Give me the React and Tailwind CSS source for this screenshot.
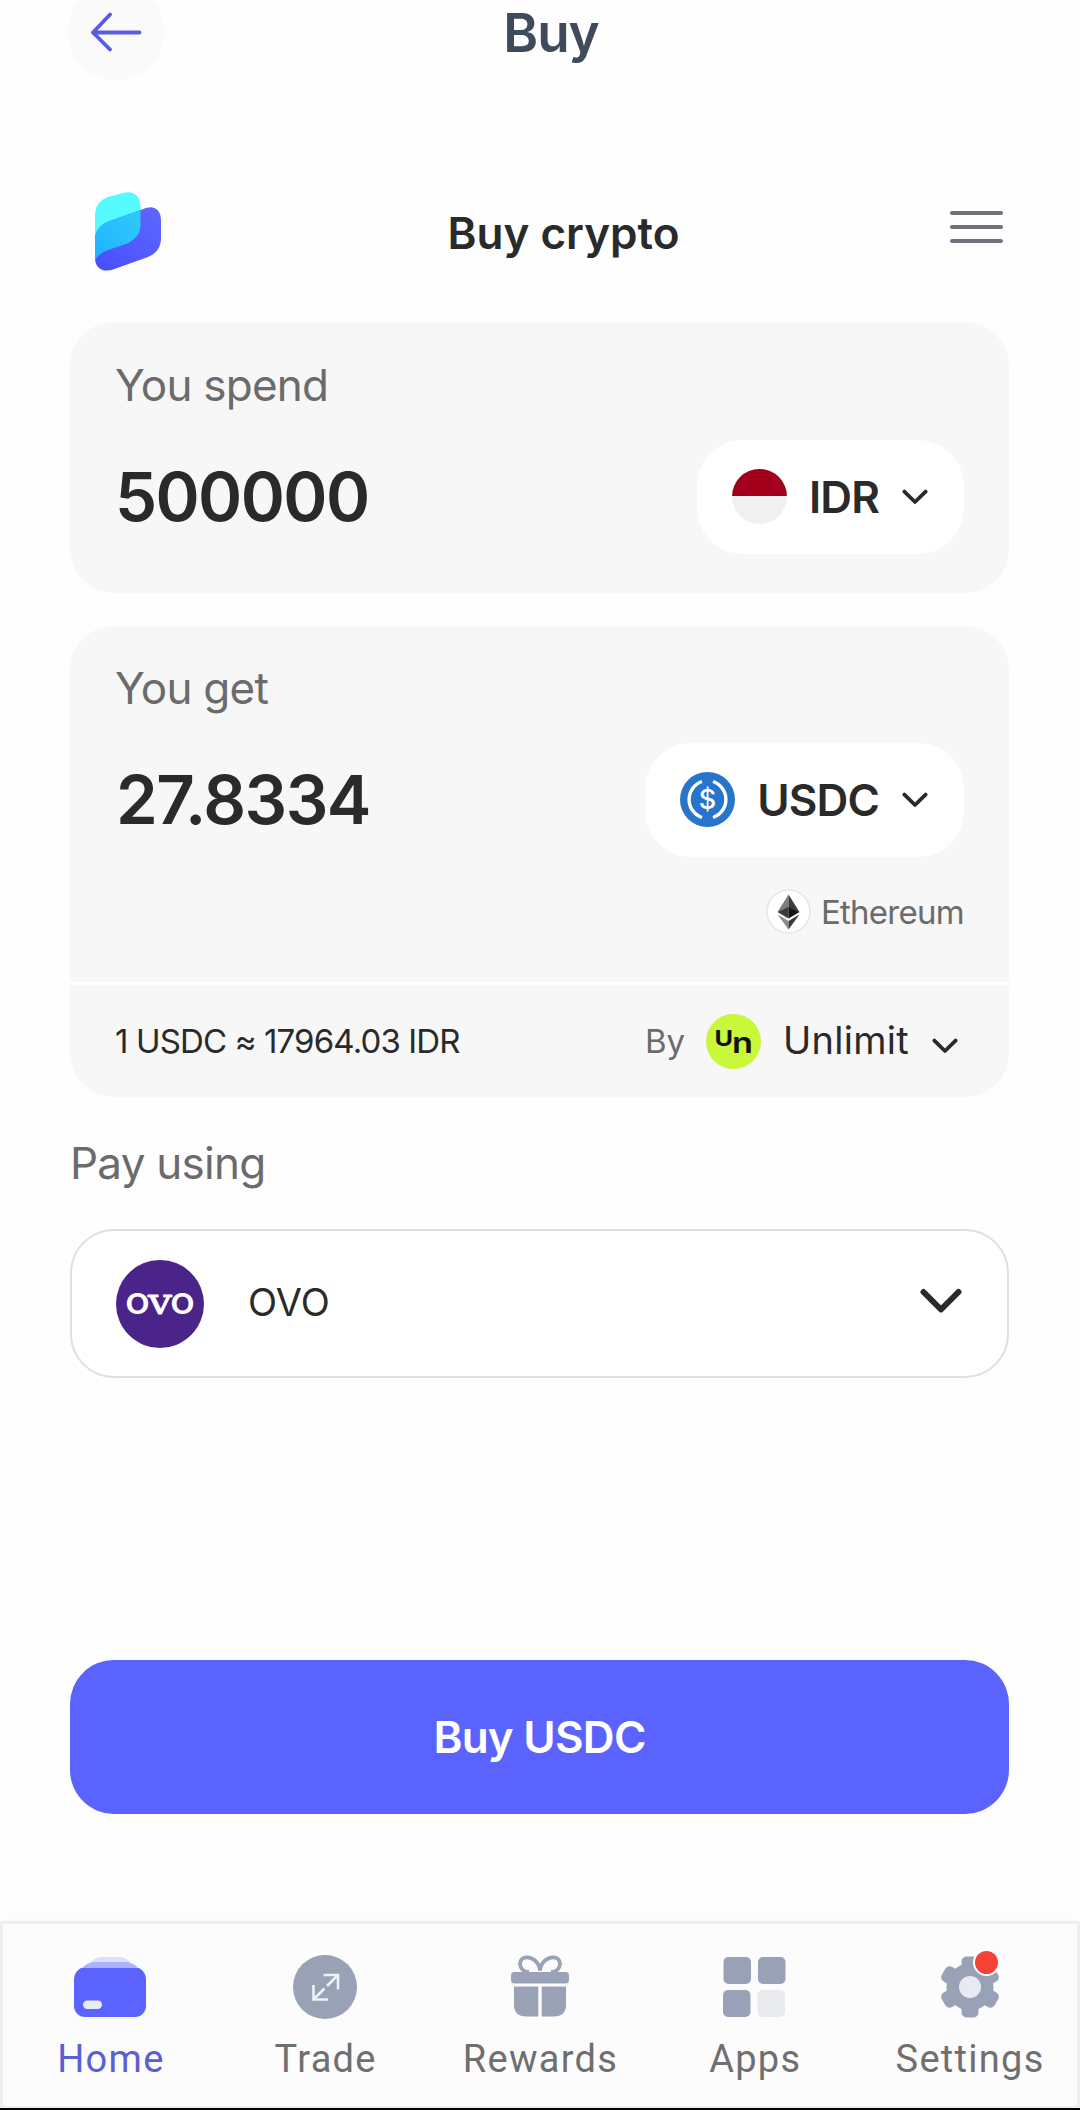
import { useState } from 'react';

const Chevron = ({ className }) => (
  <svg viewBox="0 0 26 16" className={className} fill="none" stroke="#2a2a2a" strokeWidth="3.8" strokeLinecap="round" strokeLinejoin="round">
    <path d="M2.4 2.6 L13 13 L23.6 2.6" />
  </svg>
);

const BrandLogo = () => (
  <svg viewBox="0 0 66 80" className="h-20 w-[66px]">
    <defs>
      <clipPath id="front">
        <path d="M0 24 C0 13 5 8 13 5 L29 .8 C38 -1.5 45.5 4 45.5 14 V33 C45.5 42 40 48 31 52 L16 57 C7 60 1 64 0 70 Z" />
      </clipPath>
      <linearGradient id="overlap" x1="0" y1="1" x2="1" y2="0">
        <stop offset="0" stopColor="#1eaeff" />
        <stop offset="1" stopColor="#33d2fb" />
      </linearGradient>
      <linearGradient id="body" x1="0" y1="1" x2="1" y2="0">
        <stop offset="0" stopColor="#474cff" />
        <stop offset="1" stopColor="#5f68ff" />
      </linearGradient>
    </defs>
    <path fill="#55fbff" d="M0 24 C0 13 5 8 13 5 L29 .8 C38 -1.5 45.5 4 45.5 14 V33 C45.5 42 40 48 31 52 L16 57 C7 60 1 64 0 70 Z" />
    <path fill="url(#body)" d="M0 48 C0 38 6 32 15 29 L51 16 C60 13 66 19 66 28 V46 C66 55 62 61 53 65 L18 77.500 C8 81 0 76 0 66 Z" />
    <path clipPath="url(#front)" fill="url(#overlap)" d="M0 48 C0 38 6 32 15 29 L51 16 C60 13 66 19 66 28 V46 C66 55 62 61 53 65 L18 77.500 C8 81 0 76 0 66 Z" />
  </svg>
);

const IdrFlag = () => (
  <span className="mb-[2px] flex h-[55px] w-[55px] flex-col overflow-hidden rounded-full bg-[#f0f0f0]">
    <span className="h-1/2 w-full bg-[#a2001d]" />
  </span>
);

const UsdcIcon = () => (
  <svg viewBox="0 0 55 55" className="mb-[2px] h-[55px] w-[55px]">
    <circle cx="27.500" cy="27.500" r="27.500" fill="#2775ca" />
    <g fill="none" stroke="#fff" strokeWidth="3.4">
      <path d="M22 9.500 A19 19 0 0 0 22 45.500" />
      <path d="M33 9.500 A19 19 0 0 1 33 45.500" />
    </g>
    <text x="27.500" y="37" textAnchor="middle" fill="#fff" fontFamily="Inter, sans-serif" fontSize="27" fontWeight="500">$</text>
  </svg>
);

const EthIcon = () => (
  <svg viewBox="0 0 45 45" className="h-[45px] w-[45px]">
    <circle cx="22.500" cy="22.500" r="21.500" fill="#fff" stroke="#e6e6e6" strokeWidth="1.500" />
    <path d="M22.500 5.500 L11.500 23 L22.500 18.500 Z" fill="#7d7d7d" />
    <path d="M22.500 5.500 L33.500 23 L22.500 18.500 Z" fill="#3c3c3b" />
    <path d="M11.500 23 L22.500 18 V29.500 Z" fill="#3a3a3a" />
    <path d="M33.500 23 L22.500 18 V29.500 Z" fill="#141414" />
    <path d="M11.500 25.500 L22.500 32 V40.500 Z" fill="#8c8c8c" />
    <path d="M33.500 25.500 L22.500 32 V40.500 Z" fill="#3c3c3b" />
  </svg>
);

const UnlimitIcon = () => (
  <svg viewBox="0 0 55 55" className="h-[55px] w-[55px]">
    <circle cx="27.500" cy="27.500" r="27.500" fill="#c8f73c" />
    <g fill="#111" fontFamily="Inter, sans-serif">
      <text x="8.500" y="32" fontSize="22" fontWeight="700" textLength="18.500" lengthAdjust="spacingAndGlyphs">U</text>
      <text x="26" y="39" fontSize="29" fontWeight="600" textLength="21" lengthAdjust="spacingAndGlyphs">n</text>
    </g>
  </svg>
);

const OvoIcon = () => (
  <svg viewBox="0 0 88 88" className="h-[88px] w-[88px]">
    <circle cx="44" cy="44" r="44" fill="#4b2489" />
    <g fill="#fff" fontFamily="Inter, sans-serif" fontSize="38" fontWeight="500">
      <text x="9" y="54" textLength="25" lengthAdjust="spacingAndGlyphs">o</text>
      <text x="32" y="54" fontFamily="'DejaVu Serif', serif" fontWeight="400" stroke="#fff" strokeWidth=".8" textLength="24" lengthAdjust="spacingAndGlyphs">v</text>
      <text x="54" y="54" textLength="25" lengthAdjust="spacingAndGlyphs">o</text>
    </g>
  </svg>
);

const HomeIcon = () => (
  <svg viewBox="0 0 72 64" className="h-16 w-[72px]">
    <path d="M16 8 C20 3 24 2 28 2 H44 C48 2 53 3 57 8 Z" fill="#dedfff" />
    <path d="M7 14 C12 9 16 7 21 7 H51 C56 7 61 9 65 14 Z" fill="#aeb1ff" />
    <path d="M7 13 H65 C70 16 72 20 72 25 V51 A11 11 0 0 1 61 62 H11 A11 11 0 0 1 0 51 V25 C0 20 2 16 7 13 Z" fill="#5b63ff" />
    <rect x="9" y="45.500" width="19" height="8.500" rx="4.200" fill="#e9ecf6" />
  </svg>
);

const TradeIcon = () => (
  <svg viewBox="0 0 64 64" className="h-16 w-16">
    <circle cx="32" cy="32" r="32" fill="#98a1b5" />
    <g fill="none" stroke="#eef1f8" strokeWidth="2.600">
      <path d="M30.500 20 H45 V34.500 M45 20 L34 31" />
      <path d="M20.500 30 V44.500 H35 M20.500 44.500 L31.500 33.500" />
    </g>
  </svg>
);

const RewardsIcon = () => (
  <svg viewBox="0 0 58 64" className="h-16 w-[58px]" fill="#9aa2b6">
    <g fill="none" stroke="#9aa2b6" strokeWidth="3.800">
      <path d="M29 15.500 C28 6.500 21 2.300 16 2.300 C9 2.300 8 8.500 10 12.500 C11.500 15.500 14 17 18 17" />
      <path d="M29 15.500 C30 6.500 37 2.300 42 2.300 C49 2.300 50 8.500 48 12.500 C46.500 15.500 44 17 40 17" />
    </g>
    <rect y="17" width="58" height="11.500" rx="3.500" />
    <path d="M3 31.500 H27.300 V61.500 H15 C7 61.500 3 57 3 50 Z" />
    <path d="M30.700 31.500 H55 V50 C55 57 51 61.500 43 61.500 H30.700 Z" />
  </svg>
);

const AppsIcon = () => (
  <svg viewBox="0 0 63 64" className="h-16 w-[63px]" fill="#98a1b5">
    <rect x=".5" y="2" width="27.500" height="27" rx="5" />
    <rect x="35" y="2" width="27.500" height="27" rx="5" />
    <rect x="0" y="35" width="27.500" height="27" rx="5" />
    <rect x="34.500" y="35" width="27.500" height="27" rx="5" fill="#e9eaee" />
  </svg>
);

const SettingsIcon = () => (
  <span className="relative">
    <svg viewBox="-32 -32 64 64" className="h-16 w-16" fill="#98a1b5">
      <circle r="23.500" />
      <rect x="-8.500" y="-30.500" width="17" height="61" rx="5" />
      <rect x="-8.500" y="-30.500" width="17" height="61" rx="5" transform="rotate(60)" />
      <rect x="-8.500" y="-30.500" width="17" height="61" rx="5" transform="rotate(120)" />
      <circle r="11" fill="#e8eaf2" />
    </svg>
    <span className="absolute -top-[6px] right-[2px] h-[27px] w-[27px] rounded-full border-[2.500px] border-white bg-[#f44336]" />
  </span>
);

const tabs = [
  { name: 'Home', Icon: HomeIcon },
  { name: 'Trade', Icon: TradeIcon },
  { name: 'Rewards', Icon: RewardsIcon },
  { name: 'Apps', Icon: AppsIcon },
  { name: 'Settings', Icon: SettingsIcon },
];

export default function App() {
  const [activeTab, setActiveTab] = useState('Home');

  return (
    <div className="flex h-[2110px] w-[1080px] flex-col overflow-hidden bg-[#fefefe] font-['Inter',sans-serif] text-[#2a2a2a]">
      {/* App bar */}
      <header className="grid h-16 shrink-0 grid-cols-3 grid-rows-[64px] items-center px-[68px]">
        <button className="flex h-24 w-24 items-center justify-center rounded-full bg-[#fafafb]">
          <svg viewBox="0 0 52 40" className="h-10 w-[52px]" fill="none" stroke="#5a5ce0" strokeWidth="3.800" strokeLinecap="round" strokeLinejoin="round">
            <path d="M20 2.500 L3 20.500 L20 37.500 M3 20.500 H49.500" />
          </svg>
        </button>
        <h1 className="pt-px pl-[22px] text-center text-[53px] leading-[64px] font-semibold tracking-[-0.02em] text-[#3f4a5a]">Buy</h1>
      </header>

      <div className="mt-32 flex h-20 shrink-0 items-center justify-between pr-[77px] pl-[95px]">
        <BrandLogo />
        <h2 className="ml-4 pt-[2px] text-[44px] leading-[54px] font-semibold">Buy crypto</h2>
        <button className="mb-[10px] flex flex-col gap-[9.800px]">
          <span className="h-1 w-[53px] rounded-full bg-[#71717d]" />
          <span className="h-1 w-[53px] rounded-full bg-[#71717d]" />
          <span className="h-1 w-[53px] rounded-full bg-[#71717d]" />
        </button>
      </div>

      <main className="flex flex-1 flex-col pt-[50px] pr-[71px] pl-[70px]">
        {/* You spend */}
        <section className="h-[271px] rounded-[44px] bg-[#f7f7f7] pt-9 pr-[45px] pl-[45px]">
          <p className="text-[44px] leading-[54px] tracking-[-0.017em] text-[#6b6b6b]">You spend</p>
          <div className="mt-7 flex items-center justify-between">
            <span className="text-[67px] leading-[80px] font-semibold tracking-[-0.024em]">500000</span>
            <button className="flex h-[114px] items-center rounded-[46px] bg-white pr-9 pl-[35px]">
              <IdrFlag />
              <span className="ml-[22px] text-[44px] leading-[54px] font-semibold tracking-[-0.02em]">IDR</span>
              <Chevron className="ml-[23px] h-4 w-[26px]" />
            </button>
          </div>
        </section>

        {/* You get */}
        <section className="mt-[33px] h-[471px] rounded-[44px] bg-[#f7f7f7]">
          <div className="h-[356px] pt-[35px] pr-[45px] pl-[45px]">
            <p className="text-[44px] leading-[54px] tracking-[-0.017em] text-[#6b6b6b]">You get</p>
            <div className="mt-7 flex items-center justify-between">
              <span className="pl-px text-[67px] leading-[80px] font-semibold tracking-[-0.022em]">27.8334</span>
              <button className="flex h-[114px] items-center rounded-[46px] bg-white pr-9 pl-[35px]">
                <UsdcIcon />
                <span className="ml-[22px] text-[44px] leading-[54px] font-semibold tracking-[-0.02em]">USDC</span>
                <Chevron className="ml-[23px] h-4 w-[26px]" />
              </button>
            </div>
            <div className="mt-8 flex items-center justify-end gap-[10px]">
              <EthIcon />
              <span className="text-[33px] leading-[44px] tracking-[-0.022em] text-[#6b6b6b]">Ethereum</span>
            </div>
          </div>
          <div className="flex h-[115px] items-center justify-between border-t-[3px] border-white pr-[51px] pl-[45px]">
            <span className="text-[33px] leading-[44px] tracking-[-0.026em]">1 USDC ≈ 17964.03 IDR</span>
            <button className="flex items-center">
              <span className="text-[33px] leading-[44px] text-[#6b6b6b]">By</span>
              <span className="ml-[21px]"><UnlimitIcon /></span>
              <span className="mb-[2px] ml-[22px] text-[38px] leading-[46px] tracking-[0.007em]">Unlimit</span>
              <Chevron className="mt-[10px] ml-[23px] h-4 w-[26px]" />
            </button>
          </div>
        </section>

        {/* Payment method */}
        <p className="mt-[39px] text-[44px] leading-[54px] tracking-[-0.017em] text-[#6b6b6b]">Pay using</p>
        <button className="mt-[39px] flex h-[149px] items-center rounded-[44px] border-2 border-[#dfdfdf] bg-white pr-[45px] pl-11">
          <OvoIcon />
          <span className="mb-[3px] ml-11 text-[38px] leading-[46px]">OVO</span>
          <svg viewBox="0 0 42 26" className="mb-[6px] ml-auto h-[26px] w-[42px]" fill="none" stroke="#2a2a2a" strokeWidth="6" strokeLinecap="round" strokeLinejoin="round">
            <path d="M3.500 4 L21 21.500 L38.500 4" />
          </svg>
        </button>

        <button className="mt-[282px] h-[154px] rounded-[44px] bg-[#5b63ff] text-[44px] leading-[54px] font-semibold tracking-[-0.017em] text-white">
          Buy USDC
        </button>
      </main>

      {/* Tab bar */}
      <nav className="grid h-[187px] shrink-0 grid-cols-5 border-3 border-b-2 border-[#eeeeee] bg-[#fcfcfc] pt-[31px] shadow-[0_0_16px_rgba(0,0,0,0.03)]">
        {tabs.map(({ name, Icon }) => (
          <button key={name} onClick={() => setActiveTab(name)} className="flex flex-col items-center">
            <Icon />
            <span
              className={`mt-[17px] pl-px font-['Roboto',sans-serif] text-[38px] leading-[46px] tracking-[1.300px] ${
                activeTab === name ? 'text-[#5a5fd6]' : 'text-[#6f6f6f]'
              }`}
            >
              {name}
            </span>
          </button>
        ))}
      </nav>
      <div className="h-[2px] shrink-0 bg-black" />
    </div>
  );
}
